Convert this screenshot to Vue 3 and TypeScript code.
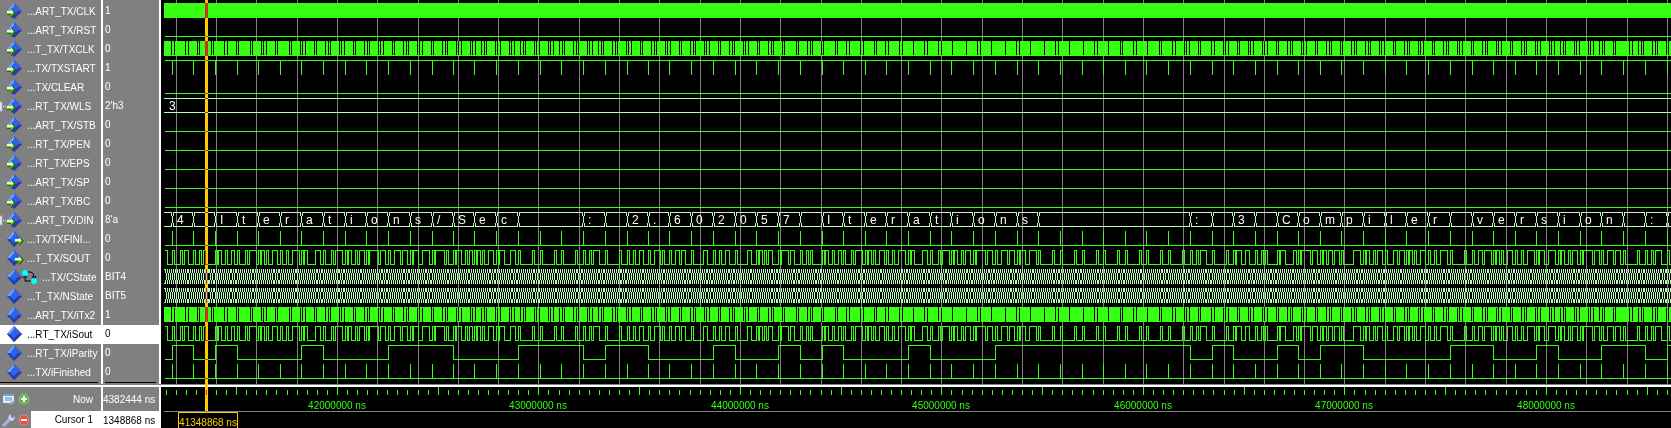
<script setup lang="ts">
interface Signal {
  name: string
  value: string
  port?: 'in' | 'out'
  expandable?: boolean
  fsm?: boolean
  selected?: boolean
}

const signals: Signal[] = [
  { name: '...ART_TX/CLK', value: '1', port: 'in' },
  { name: '...ART_TX/RST', value: '0', port: 'in' },
  { name: '...T_TX/TXCLK', value: '0', port: 'in' },
  { name: '...TX/TXSTART', value: '1', port: 'in' },
  { name: '...TX/CLEAR', value: '0', port: 'in' },
  { name: '...RT_TX/WLS', value: "2'h3", port: 'in', expandable: true },
  { name: '...ART_TX/STB', value: '0', port: 'in' },
  { name: '...RT_TX/PEN', value: '0', port: 'in' },
  { name: '...RT_TX/EPS', value: '0', port: 'in' },
  { name: '...ART_TX/SP', value: '0', port: 'in' },
  { name: '...ART_TX/BC', value: '0', port: 'in' },
  { name: '...ART_TX/DIN', value: "8'a", port: 'in', expandable: true },
  { name: '...TX/TXFINI...', value: '0', port: 'out' },
  { name: '...T_TX/SOUT', value: '0', port: 'out' },
  { name: '...TX/CState', value: 'BIT4', fsm: true },
  { name: '...T_TX/NState', value: 'BIT5' },
  { name: '...ART_TX/iTx2', value: '1' },
  { name: '...RT_TX/iSout', value: '0', selected: true },
  { name: '...RT_TX/iParity', value: '0' },
  { name: '...TX/iFinished', value: '0' },
]

const START = 164
const END = 4000
const ROW = 19

const high = (row: number): number => 3 + ROW * row
const low = (row: number): number => 17 + ROW * row
const box = (x: number, y: number, w: number, h: number): string => `M${x} ${y}h${w}v${h}h${-w}z`

/* Frame boundaries of the transmitted characters. */
const frames = [
  172, 193, 215, 237, 258, 280, 301, 323, 345, 366, 388, 410, 432, 453, 474, 496, 518, 540, 561, 583,
  605, 627, 648, 669, 691, 713, 735, 756, 778, 800, 822, 843, 865, 886, 908, 930, 951, 973, 995, 1017,
  1038, 1060, 1082, 1103, 1125, 1146, 1168, 1190, 1212, 1233, 1255, 1277, 1298, 1320, 1341, 1363, 1385,
  1406, 1428, 1450, 1472, 1493, 1515, 1536, 1558, 1580, 1601, 1623, 1645, 1667,
]
const message = '4\nIterations/Sec   : 2.602057\nIterations       : 3\nCompiler version : '
const BIT = 2.165

/* Piecewise level waveform: list of [x, level]. */
function digital(row: number, edges: [number, number][]): string {
  let d = ''
  edges.forEach(([x, level], i) => {
    const next = i + 1 < edges.length ? edges[i + 1][0] : frames[frames.length - 1] + 30
    d += box(x, level ? high(row) : low(row), next - x + 1, 1)
    if (i > 0 && edges[i - 1][1] !== level) d += box(x, high(row), 1, 15)
  })
  return d
}

const serial: [number, number][] = [[165, 1], [167, 0], [172, 1]]
frames.forEach((t, k) => {
  const code = message.charCodeAt(k)
  const at = (i: number): number => Math.floor(t + 1.7 + i * BIT)
  serial.push([t + 2, 0])
  let last = 0
  for (let b = 0; b < 8; b++) {
    const level = (code >> b) & 1
    if (level !== last) serial.push([at(b + 1), level])
    last = level
  }
  const stop = k + 1 < frames.length ? frames[k + 1] : t + 22
  if (!last) serial.push([stop, 1])
})

const parity: [number, number][] = [[165, 0]]
frames.forEach((t, k) => {
  let ones = 0
  for (let c = message.charCodeAt(k); c; c >>= 1) ones += c & 1
  if ((ones & 1) !== parity[parity.length - 1][1]) parity.push([t, ones & 1])
})

function bus(row: number, changes: number[]): string {
  const y = high(row)
  let d = ''
  let from = START
  for (const x of [...changes, END]) {
    if (x - from > 0) d += box(from, y, x - from, 1) + box(from, y + 14, x - from, 1)
    if (x < END) {
      d += box(x - 1, y, 1, 4) + box(x + 1, y, 1, 4) + box(x, y + 4, 1, 7)
      d += box(x - 1, y + 11, 1, 4) + box(x + 1, y + 11, 1, 4)
    }
    from = x + 1
  }
  return d
}

const dataChanges = frames.filter((_, k) => k === 0 || message[k] !== message[k - 1])
const stateChanges: number[] = [166, 168, 170]
frames.forEach((t) => {
  stateChanges.push(t)
  for (let i = 0; i < 9; i++) stateChanges.push(Math.floor(t + 2 + i * BIT))
})

const spikes = (row: number): string => frames.map((x) => box(x, high(row), 1, 15)).join('')
const rail = (y: number, x = 165): string => box(x, y, END, 1)

/* Columns, in thirds of a pixel from each origin, where the bit clock rests. */
const rests: [number, number[]][] = [
  [160, [35, 44, 77, 86, 113, 119, 155, 161, 194, 203, 230, 236, 272, 278, 305, 311, 320, 347, 353, 389,
    395, 422, 428, 437, 464, 470, 497, 506, 512, 539, 545, 554, 581, 587, 614, 623, 629, 656, 662, 671,
    698, 704, 731, 740, 746, 773, 779, 788, 815, 821, 848, 857, 863, 890, 896, 905, 932, 938, 947, 965,
    974, 980, 1007, 1013, 1022, 1049, 1055, 1064, 1082, 1091, 1097, 1124, 1130, 1139]],
  [540, [25, 31, 40, 58, 67, 73, 100, 109, 115, 142, 148, 157, 175, 184, 190, 217, 226, 232, 259, 265,
    274, 301, 307, 334, 343, 349, 376, 382, 391, 418, 424, 451, 460, 466, 493, 499, 508, 535, 541, 568,
    577, 583, 610, 616, 625, 652, 658, 685, 694, 700, 727, 733, 769, 775, 802, 811, 817, 844, 850, 886,
    892, 919, 928, 961, 970, 1003, 1009, 1036, 1045, 1078, 1087, 1120]],
  [920, [13, 22, 55, 64, 97, 139, 172, 181, 214, 256, 289, 298, 331, 373, 406, 415, 448, 490, 523, 532,
    565, 601, 607, 640, 649, 682, 718, 724, 757, 766, 793, 799, 808, 835, 841, 874, 883, 910, 916, 925,
    952, 958, 985, 991, 1000, 1027, 1033, 1042, 1069, 1075, 1102]],
  [1290, [1, 7, 35, 41, 49, 77, 83, 110, 119, 125, 152, 158, 185, 194, 200, 227, 236, 242, 269, 275,
    284, 311, 317, 344, 353, 359, 386, 392, 401, 428, 434, 461, 470, 476, 503, 509, 518, 545, 551, 578,
    587, 593, 620, 626, 635, 662, 668, 695, 704, 710, 737, 743, 752, 779, 785, 794, 812, 821, 827, 854,
    860, 869, 896, 902, 911, 929, 938, 944, 971, 977, 1019, 1028, 1046, 1055, 1061, 1088, 1097, 1103,
    1130, 1136]],
]
const gaps = rests.flatMap(([origin, cols]) => cols.map((c) => origin + Math.floor(c / 3)))

const fills = box(START, high(0), END, 15) + box(START, high(2), END, 15) + box(START, high(16), END, 15)
const gapPath =
  gaps.map((x) => box(x, high(2), 1, 14)).join('') +
  gaps.map((x, i) => box(x, high(16) + (i % 2), 1, 14)).join('')

const greenPath = [
  rail(low(1)), rail(high(3)), spikes(3), rail(low(4)),
  ...[6, 7, 8, 9, 10].map((r) => rail(low(r))),
  rail(low(12)), spikes(12),
  digital(13, serial), digital(17, serial), digital(18, parity),
  rail(low(19)), spikes(19),
].join('')

const mintPath = [rail(high(5), START), rail(low(5), START), bus(11, dataChanges), bus(14, stateChanges), bus(15, stateChanges)].join('')

const letters = frames
  .map((x, k) => ({ x: x + 5, text: message[k] }))
  .filter((l) => l.text.trim().length > 0)

const tickX = (i: number): number => Math.floor(337.4 + i * 10.075)
const ticks = Array.from({ length: 250 }, (_, k) => k - 17)
const gridPath = ticks.filter((i) => i % 4 === 0).map((i) => box(tickX(i), 0, 1, 384)).join('')
const tickPath = ticks
  .map((i) => (i % 10 === 0 ? box(tickX(i), 387, 1, 8) : box(tickX(i), 390, 1, 5)))
  .join('')
const times = [42, 43, 44, 45, 46, 47, 48].map((m, k) => ({ x: tickX(k * 20), text: `${m}000000 ns` }))
</script>

<template>
  <main class="wave">
    <section class="side">
      <ul class="signals">
        <li v-for="s in signals" :key="s.name" class="row" :class="{ selected: s.selected }">
          <span class="name">
            <svg class="icon" width="27" height="19" viewBox="0 0 27 19">
              <g v-if="s.expandable">
                <rect x="-6" y="5" width="8" height="9" fill="#e6e9f2" stroke="#a9afc4" />
                <path d="M3 9h1v1h-1zM5 9h1v1h-1z" fill="#ddd" />
              </g>
              <path d="M14 1L22 9L14 17L7 9z" fill="#2a50d8" />
              <path d="M14 1L7 9L11 9L15 5z" fill="#79a4f4" />
              <path d="M14 1L22 9L18 9L14 5z" fill="#3f62cc" />
              <path d="M22 9L14 17L14 13L18 9z" fill="#3434a4" />
              <path d="M7 9L14 17L14 13L10 9z" fill="#2940b4" />
              <path d="M14 4L18 9L14 13L10 9z" fill="#2467f2" />
              <g v-if="s.port" :transform="s.port === 'out' ? 'translate(8 0)' : undefined">
                <path d="M7 9h4v-3l5 5l-5 5v-3h-4z" fill="#1d6512" />
                <path d="M7 9h4v-2l3 4h-7z" fill="#f3ffc4" />
                <path d="M7 11h7l-3 3v-2h-4z" fill="#7ce61c" />
              </g>
            </svg>
            <svg v-if="s.fsm" class="icon" width="16" height="19" viewBox="0 0 16 19">
              <path d="M3 6V13H9M5 4H9Q12 5 12 9V12M1 10L3 7L5 10M10 8L12 11L14 8" fill="none" stroke="#000" stroke-width="1" />
              <circle cx="3" cy="5" r="3" fill="#0ff" />
              <circle cx="12" cy="13" r="3" fill="#0ff" />
            </svg>
            <span>{{ s.name }}</span>
          </span>
          <span class="value">{{ s.value }}</span>
        </li>
      </ul>
      <div class="row endline"><span class="name"><i></i></span><span class="value"><i></i></span></div>
      <div class="split"></div>
      <div class="row foot">
        <span class="name">
          <button type="button" aria-label="Edit grid and timeline">
            <svg width="14" height="14" viewBox="0 0 14 14">
              <rect x="1" y="2" width="11" height="9" fill="#dce9f8" />
              <path d="M1 2h11v2h-11z" fill="#6f9fe0" />
              <path d="M3 6h7M3 8h7" stroke="#6c8ec4" />
              <path d="M6 12l5 -3l2 1l-4 3z" fill="#94a2bc" />
            </svg>
          </button>
          <button type="button" aria-label="Insert cursor">
            <svg width="12" height="12" viewBox="0 0 12 12">
              <circle cx="6" cy="6" r="5" fill="#59b545" stroke="#8bc77e" />
              <path d="M5 3h2v2h2v2h-2v2h-2v-2h-2v-2h2z" fill="#fff" />
            </svg>
          </button>
          <b>Now</b>
        </span>
        <span class="value">4382444 ns</span>
      </div>
      <div class="row foot cursor">
        <span class="name">
          <button type="button" aria-label="Configure cursor">
            <svg width="14" height="14" viewBox="0 0 14 14">
              <path d="M1 13L7 7" stroke="#9db8e4" stroke-width="3" />
              <path d="M7 7Q5 3 9 1V4L11 5L13 3Q13 8 9 8z" fill="#c3d4f2" />
            </svg>
          </button>
          <button type="button" aria-label="Delete cursor">
            <svg width="12" height="12" viewBox="0 0 12 12">
              <circle cx="6" cy="6" r="5" fill="#e4523f" stroke="#ec8678" />
              <path d="M3 5h6v2h-6z" fill="#fff" />
            </svg>
          </button>
          <b>Cursor 1</b>
        </span>
        <span class="value">1348868 ns</span>
      </div>
    </section>

    <section class="plot">
      <svg width="100%" height="428" shape-rendering="crispEdges">
        <g transform="translate(-161 0)">
          <path :d="gridPath" fill="#808080" />
          <path :d="fills" fill="#36ff14" />
          <path :d="gapPath" fill="#000" />
          <path :d="greenPath" fill="#36ff14" />
          <path :d="mintPath" fill="#b4ffb4" />
          <text class="letter" x="169" y="110">3</text>
          <text v-for="l in letters" :key="l.x" class="letter" :x="l.x" y="224">{{ l.text }}</text>
          <path :d="tickPath" fill="#36ff14" />
          <rect class="marker" x="205" y="0" width="3" height="411" />
          <rect x="161" y="384" width="4000" height="1" fill="#808080" />
          <rect x="161" y="385" width="4000" height="2" fill="#fff" />
          <rect x="205" y="384" width="3" height="3" fill="#ffcc00" />
          <text v-for="t in times" :key="t.x" class="time" :x="t.x" y="409">{{ t.text }}</text>
          <rect x="164" y="411" width="4000" height="1" fill="#808080" />
          <path d="M178 412h60v16h-1v-15h-58v15h-1z" fill="#ffcc00" />
          <text class="time now" x="208" y="426">41348868 ns</text>
        </g>
      </svg>
    </section>
  </main>
</template>

<style>
body {
  background: #000;
}
</style>

<style scoped>
.wave {
  display: flex;
  background: #000;
  overflow: hidden;
  font-family: "Liberation Sans", Arial, sans-serif;
  font-size: 10px;
  color: #fff;
}
.side {
  flex: none;
  width: 161px;
  background: #808080;
}
.signals {
  list-style: none;
  margin: 0;
  padding: 2px 0 0;
  background: linear-gradient(#fff, #fff) 101px 0 / 2px 2px no-repeat, linear-gradient(#fff, #fff) 159px 0 / 2px 2px no-repeat;
}
.row {
  display: flex;
  height: 19px;
  line-height: 18px;
  white-space: nowrap;
}
.name {
  box-sizing: border-box;
  width: 103px;
  display: flex;
  align-items: center;
  border-right: 2px solid #fff;
  overflow: hidden;
}
.value {
  box-sizing: border-box;
  flex: 1;
  padding-left: 2px;
  border-right: 2px solid #fff;
  overflow: hidden;
}
.icon {
  flex: none;
}
.icon + .icon {
  margin-left: -5px;
  margin-right: 4px;
}
.selected .name,
.selected .value {
  background: #fff;
  color: #000;
}
.endline {
  height: 2px;
}
.endline i {
  display: block;
  flex: 1;
  height: 1px;
  margin: 0 3px 1px 0;
  background: #000;
}
.split {
  height: 2px;
  border-top: 1px solid #808080;
  background: #fff;
}
.foot {
  height: 24px;
  line-height: 25px;
}
.foot .value {
  padding-left: 0;
}
.foot button {
  display: flex;
  margin: 0 0 0 2px;
  padding: 0;
  border: 0;
  background: #808080;
}
.foot b {
  flex: 1;
  padding-right: 8px;
  font-weight: normal;
  text-align: right;
}
.cursor {
  height: 17px;
  line-height: 20px;
}
.cursor b {
  margin-left: 1px;
}
.cursor b,
.cursor .value {
  background: #fff;
  color: #000;
}
.plot {
  flex: 1;
  min-width: 0;
  background: #000;
}
.plot svg {
  display: block;
}
.letter {
  font-size: 12px;
  fill: #fff;
}
.time {
  fill: #36ff14;
  text-anchor: middle;
}
.now {
  fill: #ffcc00;
}
.marker {
  fill: #ffcc00;
  mix-blend-mode: difference;
}
</style>
